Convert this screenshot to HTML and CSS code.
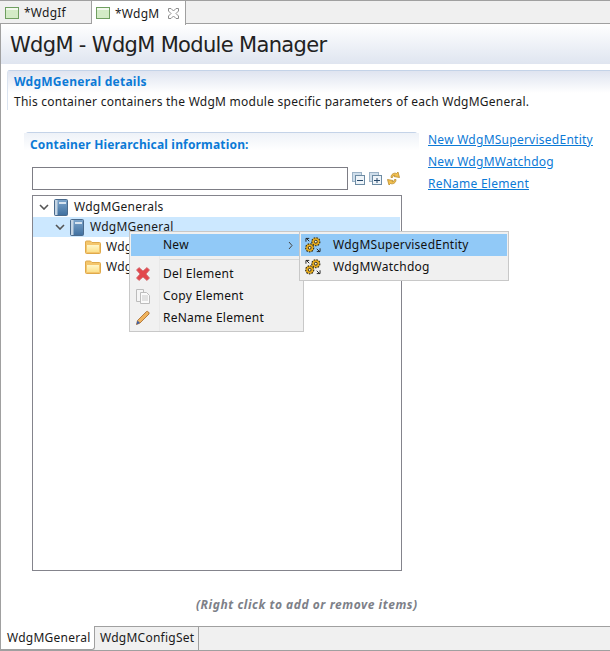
FILE: index.html
```html
<!DOCTYPE html>
<html lang="en">
<head>
<meta charset="utf-8">
<title>WdgM</title>
<link rel="stylesheet" href="styles.css">
</head>
<body>
<svg class="defs" width="0" height="0" aria-hidden="true">
  <defs>
    <linearGradient id="g-book" x1="0" y1="0" x2="0" y2="1"><stop offset="0" stop-color="#7ea6cc"/><stop offset="1" stop-color="#3f6f9f"/></linearGradient>
    <linearGradient id="g-folder" x1="0" y1="0" x2="0" y2="1"><stop offset="0" stop-color="#fff6c8"/><stop offset="1" stop-color="#fbe08c"/></linearGradient>
    <symbol id="i-book" viewBox="0 0 14 17">
      <rect x="0.500" y="0.500" width="13" height="16" rx="1" fill="url(#g-book)" stroke="#4a6a8c"/>
      <rect x="1" y="1" width="2.500" height="15" fill="#c5d5e4"/>
      <rect x="5" y="3" width="7" height="2" fill="#d7e4f0"/>
    </symbol>
    <symbol id="i-folder" viewBox="0 0 16 14">
      <path d="M0.500 12.500V2q0-1 1-1h4l1.500 1.500h7.500q1 0 1 1v9q0 1-1 1h-13q-1 0-1-1z" fill="#f4c66c" stroke="#dfa94a"/>
      <rect x="2" y="5" width="12" height="7" fill="url(#g-folder)"/>
    </symbol>
    <symbol id="i-gears" viewBox="0 0 17 17">
      <path d="M1 5V1.500h3.500M1.500 1.500l3 3M16 12v3.500h-3.500M15.500 15.500l-3-3" fill="none" stroke="#1f1f1f"/>
      <circle cx="11.500" cy="5" r="4.300" fill="#e8ac1c" stroke="#2e2a1c" stroke-width="1.200" stroke-dasharray="1.700 1.200"/>
      <circle cx="11.500" cy="5" r="1.500" fill="#fff4c8" stroke="#2a2a2a"/>
      <circle cx="5" cy="11.500" r="4.300" fill="#e8ac1c" stroke="#2e2a1c" stroke-width="1.200" stroke-dasharray="1.700 1.200"/>
      <circle cx="5" cy="11.500" r="1.500" fill="#fff4c8" stroke="#2a2a2a"/>
    </symbol>
    <symbol id="i-editor" viewBox="0 0 14 12">
      <rect x="0.500" y="0.500" width="13" height="11" fill="#d3ebc6" stroke="#6f9f60"/>
      <rect x="1" y="1" width="12" height="2" fill="#f3f9ee"/>
    </symbol>
  </defs>
</svg>

<div class="page">
  <div class="tabbar">
    <div class="tab">
      <svg class="tab-icon"><use href="#i-editor"/></svg>
      <span>*WdgIf</span>
    </div>
    <div class="tab tab-active">
      <svg class="tab-icon"><use href="#i-editor"/></svg>
      <span>*WdgM</span>
      <svg class="tab-close" viewBox="0 0 11 11"><path d="M0.500 0.500h2.500l2.500 2.500 2.500-2.500h2.500v2.500l-2.500 2.500 2.500 2.500v2.500h-2.500l-2.500-2.500-2.500 2.500h-2.500v-2.500l2.500-2.500-2.500-2.500z" fill="#fff" stroke="#8d8d8d"/></svg>
    </div>
  </div>

  <div class="editor">
    <header class="form-head"><h1>WdgM - WdgM Module Manager</h1></header>

    <section class="details">
      <h2 class="details-title">WdgMGeneral details</h2>
      <p class="details-desc">This container containers the WdgM module specific parameters of each WdgMGeneral.</p>
    </section>

    <div class="columns">
      <section class="tree-panel">
        <h3 class="panel-title">Container Hierarchical information:</h3>
        <div class="filter-row">
          <div class="filter-input"></div>
          <svg class="tool" viewBox="0 0 13 13"><rect x="0.500" y="0.500" width="9" height="9" fill="#cfdeeb" stroke="#9bb2c6"/><rect x="3.500" y="3.500" width="9" height="9" fill="#eef4f9" stroke="#6d8ba3"/><path d="M5 8.500h6" stroke="#27496b"/></svg>
          <svg class="tool" viewBox="0 0 13 13"><rect x="0.500" y="0.500" width="9" height="9" fill="#cfdeeb" stroke="#9bb2c6"/><rect x="3.500" y="3.500" width="9" height="9" fill="#eef4f9" stroke="#6d8ba3"/><path d="M5 8.500h6M8 6v5" stroke="#27496b"/></svg>
          <svg class="tool tool-sync" viewBox="0 0 15 15"><path d="M5 6.500C5 3 8 1.500 10.500 2.500L12 1l1.500 5.500L8 5.500l1-1.200C7.500 4 6.500 5 6.500 6.500z" fill="#f2c04e" stroke="#b98a2c" stroke-width=".8"/><path d="M10 8.500C10 12 7 13.500 4.500 12.500L3 14 1.500 8.500 7 9.500l-1 1.200C7.500 11 8.500 10 8.500 8.500z" fill="#f2c04e" stroke="#b98a2c" stroke-width=".8"/></svg>
        </div>
        <div class="tree">
          <div class="row row-l0"><svg class="twist" viewBox="0 0 10 6"><path d="M1 1l4 4 4-4" fill="none" stroke="#555" stroke-width="1.600"/></svg><svg class="row-book"><use href="#i-book"/></svg><span class="row-text">WdgMGenerals</span></div>
          <div class="row row-l1 row-sel"><svg class="twist" viewBox="0 0 10 6"><path d="M1 1l4 4 4-4" fill="none" stroke="#555" stroke-width="1.600"/></svg><svg class="row-book"><use href="#i-book"/></svg><span class="row-text">WdgMGeneral</span></div>
          <div class="row row-l2"><svg class="row-folder"><use href="#i-folder"/></svg><span class="row-text">WdgMSupervisedEntity</span></div>
          <div class="row row-l2"><svg class="row-folder"><use href="#i-folder"/></svg><span class="row-text">WdgMWatchdog</span></div>
        </div>
        <p class="hint">(Right click to add or remove items)</p>
      </section>
      <nav class="links">
        <a href="#">New WdgMSupervisedEntity</a>
        <a href="#">New WdgMWatchdog</a>
        <a href="#">ReName Element</a>
      </nav>
    </div>

    <div class="bottom-tabs">
      <div class="btab btab-active">WdgMGeneral</div>
      <div class="btab">WdgMConfigSet</div>
    </div>
  </div>

  <div class="menu menu-main">
    <div class="mi mi-hot"><span class="mi-ic"></span><span class="mi-text">New</span><svg class="mi-arrow" viewBox="0 0 5 9"><path d="M1 1l3 3.500-3 3.500" fill="none" stroke="#444"/></svg></div>
    <div class="mi-sep"></div>
    <div class="mi"><span class="mi-ic"><svg class="ic16" viewBox="0 0 16 16"><path d="M1.500 4l2.500-2.500 4 3.500 4-3.500L14.500 4 11 8l3.500 4-2.500 2.500-4-3.500-4 3.500L1.500 12 5 8z" fill="#e2474c" stroke="#cf6a6e" stroke-width=".8"/></svg></span><span class="mi-text">Del Element</span></div>
    <div class="mi"><span class="mi-ic"><svg class="ic16" viewBox="0 0 16 16"><path d="M1.500 1.500h7v12h-7z" fill="#f5f5f5" stroke="#bcbcbc"/><path d="M5.500 4.500h6l3 3v8h-9z" fill="#fafafa" stroke="#bcbcbc"/><path d="M7 8h6M7 10h6M7 12h6" stroke="#c8c8c8"/></svg></span><span class="mi-text">Copy Element</span></div>
    <div class="mi"><span class="mi-ic"><svg class="ic16" viewBox="0 0 16 16"><path d="M1.500 14.500l1-4L11.500 1.500q1-.5 2 .5t.5 2L5 13z" fill="#f0b35c" stroke="#a5672a" stroke-width=".8"/><path d="M1.500 14.500l1-4 2.500 2.500z" fill="#3c5fa8"/></svg></span><span class="mi-text">ReName Element</span></div>
  </div>

  <div class="menu menu-sub">
    <div class="mi mi-hot"><span class="mi-ic2"><svg class="ic16"><use href="#i-gears"/></svg></span><span class="mi-text">WdgMSupervisedEntity</span></div>
    <div class="mi"><span class="mi-ic2"><svg class="ic16"><use href="#i-gears"/></svg></span><span class="mi-text">WdgMWatchdog</span></div>
  </div>
</div>
</body>
</html>
```
FILE: styles.css
```css
* { box-sizing: border-box; }
html, body { margin: 0; padding: 0; background: #fff; }
body { font-family: "Noto Sans", "DejaVu Sans", sans-serif; font-size: 12px; letter-spacing: .25px; color: #1a1a1a; }
.defs { position: absolute; }
.page { position: relative; width: 610px; height: 651px; overflow: hidden; }

.tabbar { display: flex; height: 24px; background: #f0f0f0; border-top: 1px solid #a0a0a0; border-bottom: 1px solid #a0a0a0; }
.tab { display: flex; align-items: center; gap: 5px; width: 92px; padding-left: 5px; border-right: 1px solid #a0a0a0; margin-bottom: -1px; }
.tab-active { width: 94px; background: #fff; padding-left: 4px; position: relative; z-index: 1; height: 24px; }
.tab-icon { width: 14px; height: 12px; flex: none; }
.tab-close { width: 11px; height: 11px; margin-left: 4px; flex: none; }

.editor { height: 627px; border-left: 1px solid #a0a0a0; border-bottom: 1px solid #a0a0a0; display: flex; flex-direction: column; }
.form-head { height: 40px; background: linear-gradient(#fff, #dfe5f0); padding: 7px 0 0 9px; }
.form-head h1 { margin: 0; font-size: 21px; line-height: 28px; font-weight: 400; color: #222; font-family: "DejaVu Sans", sans-serif; letter-spacing: -.67px; }

.details { margin: 6px 0 0 6px; border-top: 1px solid #c4d3e8; border-left: 1px solid #dbe4f0; border-top-left-radius: 3px; }
.details-title { margin: 0; height: 22px; padding: 4px 0 0 6px; font-size: 12px; line-height: 14px; color: #0c7ad6; background: linear-gradient(#dfe4f0, #fff); font-weight: 700; }
.details-desc { margin: 0; padding: 0 0 0 6px; line-height: 17px; height: 17px; white-space: nowrap; }

.columns { flex: 1; display: flex; padding: 22px 0 0 23px; min-height: 0; }
.tree-panel { width: 395px; border-top: 1px solid #c4d3e8; border-radius: 5px 5px 0 0; position: relative; }
.panel-title { margin: 0; height: 25px; padding: 4px 0 0 6px; font-size: 12px; line-height: 16px; letter-spacing: .17px; color: #0c7ad6; font-weight: 700; background: linear-gradient(#eef2f8, #fff 70%); }
.filter-row { display: flex; align-items: center; margin: 9px 0 0 8px; height: 23px; }
.filter-input { width: 316px; height: 23px; border: 1px solid #7d7d85; background: #fff; margin-right: 4px; }
.tool { width: 13px; height: 13px; margin-right: 4px; flex: none; }
.tool-sync { width: 15px; height: 15px; margin-right: 0; }
.tree { width: 370px; height: 376px; margin: 5px 0 0 8px; border: 1px solid #84848c; padding-top: 1px; }
.row { display: flex; align-items: center; height: 20px; }
.row-text { margin-top: -2px; white-space: nowrap; }
.row-l0 { padding-left: 6px; }
.row-l1 { padding-left: 22px; margin-right: 1px; }
.row-l2 { padding-left: 52px; }
.row-sel { background: #cce8ff; }
.twist { width: 10px; height: 6px; margin-right: 5px; flex: none; }
.row-book { width: 14px; height: 17px; margin-right: 6px; flex: none; }
.row-folder { width: 16px; height: 14px; margin-right: 5px; flex: none; }
.hint { margin: 27px 0 0 172px; font-weight: 700; font-style: italic; color: #7d8088; line-height: 14px; letter-spacing: .55px; white-space: nowrap; }

.links { display: flex; flex-direction: column; gap: 6px; padding: 0 0 0 9px; }
.links a { color: #0c7ad6; line-height: 16px; white-space: nowrap; }

.bottom-tabs { display: flex; height: 24px; margin-top: auto; background: #f0f0f0; border-top: 1px solid #a0a0a0; }
.btab { padding: 3px 0 0 5px; line-height: 16px; border-right: 1px solid #a0a0a0; width: 104px; white-space: nowrap; }
.btab-active { width: 94px; background: #fff; margin-top: -1px; height: 24px; padding-top: 4px; padding-left: 6px; border-bottom: 1px solid #a0a0a0; border-bottom-right-radius: 3px; }

.menu { position: absolute; background: #f0f0f0; border: 1px solid #c8c8c8; padding: 2px 1px; color: #111; }
.menu-main { left: 129px; top: 231px; width: 175px; height: 101px; background: linear-gradient(90deg, #f1f1f1 29px, #e9e9e9 29px, #e9e9e9 30px, #f0f0f0 30px); }
.menu-sub { left: 299px; top: 231px; width: 210px; height: 50px; z-index: 2; }
.mi { display: flex; align-items: center; height: 22px; }
.mi-hot { background: #91c9f7; }
.mi-text { white-space: nowrap; margin-top: -2px; }
.mi-sep { height: 1px; margin: 3px 2px 3px 29px; background: #d7d7d7; }
.mi-ic { width: 32px; display: flex; justify-content: flex-start; padding-left: 4px; flex: none; }
.mi-ic2 { width: 32px; display: flex; justify-content: flex-start; flex: none; padding-left: 4px; }
.ic16 { width: 16px; height: 16px; display: block; }
.mi-arrow { width: 5px; height: 9px; margin-left: auto; margin-right: 9px; }
```
